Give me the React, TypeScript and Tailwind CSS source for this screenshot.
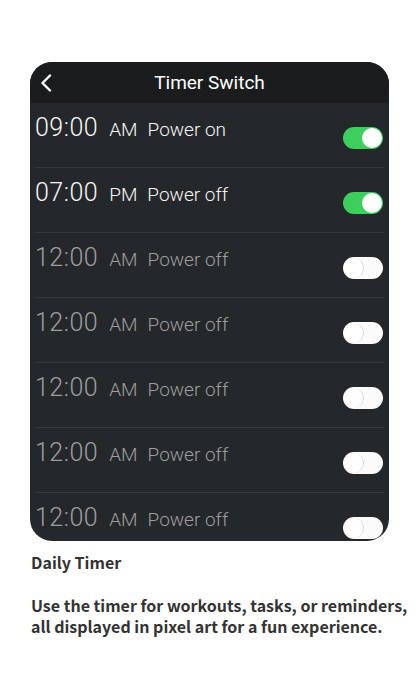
import { useState } from "react";

type Timer = {
  time: string;
  period: string;
  action: string;
  enabled: boolean;
};

const initialTimers: Timer[] = [
  { time: "09:00", period: "AM", action: "Power on", enabled: true },
  { time: "07:00", period: "PM", action: "Power off", enabled: true },
  { time: "12:00", period: "AM", action: "Power off", enabled: false },
  { time: "12:00", period: "AM", action: "Power off", enabled: false },
  { time: "12:00", period: "AM", action: "Power off", enabled: false },
  { time: "12:00", period: "AM", action: "Power off", enabled: false },
  { time: "12:00", period: "AM", action: "Power off", enabled: false },
];

function Toggle({ on, onChange }: { on: boolean; onChange: () => void }) {
  return (
    <button
      onClick={onChange}
      className={
        on
          ? "w-[40px] h-[22px] rounded-full bg-[#3ccf5d] flex items-center justify-end px-[1px]"
          : "w-[40px] h-[22px] rounded-full bg-[#fbfbfb] flex items-center justify-start px-[1px]"
      }
    >
      <span
        className={
          on
            ? "block w-[20px] h-[20px] rounded-full bg-white"
            : "block w-[20px] h-[20px] rounded-full bg-white border-r border-[#d6d6d6]"
        }
      />
    </button>
  );
}

export default function App() {
  const [timers, setTimers] = useState(initialTimers);

  const toggle = (i: number) =>
    setTimers((t) => t.map((x, j) => (j === i ? { ...x, enabled: !x.enabled } : x)));

  return (
    <div className="w-[420px] h-[698px] bg-white overflow-hidden pt-[62px]">
      {/* Phone card */}
      <div
        className="ml-[30px] w-[359px] h-[479px] rounded-[22px] overflow-hidden bg-[#25282b]"
        style={{ fontFamily: "Roboto, 'Noto Sans', sans-serif" }}
      >
        <div className="h-[41px] bg-[#1b1c1e] relative flex items-center justify-center">
          <svg
            className="absolute left-[9px] top-[12px]"
            width="14"
            height="18"
            viewBox="0 0 14 18"
            fill="none"
          >
            <path d="M11 1.5 L3.5 9 L11 16.5" stroke="white" strokeWidth="2.4" strokeLinecap="round" strokeLinejoin="round" />
          </svg>
          <span className="text-[19px] leading-none text-white">Timer Switch</span>
        </div>

        {timers.map((t, i) => (
          <div key={i} className="h-[65px] mx-[5px] border-b border-[#35383b] flex justify-between">
            <div
              className={
                t.enabled
                  ? "flex items-baseline pt-[12px] leading-none text-[#f7f7f7] font-light"
                  : "flex items-baseline pt-[12px] leading-none text-[#9d9e9f] font-light"
              }
            >
              <span className="text-[25px] tracking-[0.5px]">{t.time}</span>
              <span className="text-[19px] ml-[11px]">{t.period}</span>
              <span className="text-[19px] ml-[10px]">{t.action}</span>
            </div>
            <div className="pt-[24px] pr-[1px]">
              <Toggle on={t.enabled} onChange={() => toggle(i)} />
            </div>
          </div>
        ))}
      </div>

      {/* Description */}
      <div
        className="ml-[31px] text-[#333333] font-semibold text-[16px]"
        style={{ fontFamily: "'Noto Sans CJK SC', 'Noto Sans', sans-serif" }}
      >
        <div className="mt-[11px] leading-[20px]">Daily Timer</div>
        <p className="mt-[23px] leading-[21px] w-[386px]">
          Use the timer for workouts, tasks, or reminders, all displayed in pixel art for a fun experience.
        </p>
      </div>
    </div>
  );
}
